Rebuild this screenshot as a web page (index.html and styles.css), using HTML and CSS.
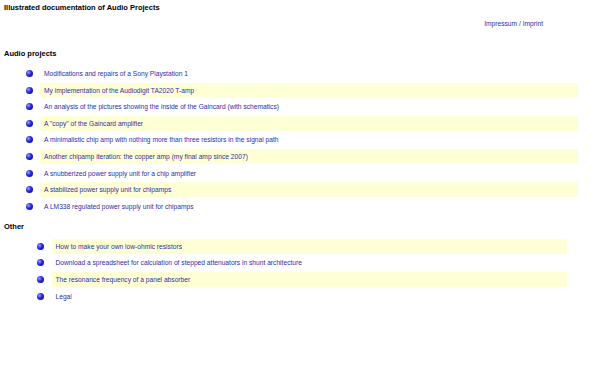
FILE: index.html
```html
<!DOCTYPE html>
<html lang="en">
<head>
  <meta charset="UTF-8" />
  <title>Illustrated documentation of Audio Projects</title>
  <link rel="stylesheet" href="styles.css">
</head>
<body>
  <h1>Illustrated documentation of Audio Projects</h1>
  <p class="imprint"><a href="#">Impressum / Imprint</a></p>

  <h2>Audio projects</h2>
  <ul class="projects">
    <li><span class="dot"></span><a href="#">Modifications and repairs of a Sony Playstation 1</a></li>
    <li class="hl"><span class="dot"></span><a href="#">My implementation of the Audiodigit TA2020 T-amp</a></li>
    <li><span class="dot"></span><a href="#">An analysis of the pictures showing the inside of the Gaincard (with schematics)</a></li>
    <li class="hl"><span class="dot"></span><a href="#">A "copy" of the Gaincard amplifier</a></li>
    <li><span class="dot"></span><a href="#">A minimalistic chip amp with nothing more than three resistors in the signal path</a></li>
    <li class="hl"><span class="dot"></span><a href="#">Another chipamp iteration: the copper amp (my final amp since 2007)</a></li>
    <li><span class="dot"></span><a href="#">A snubberized power supply unit for a chip amplifier</a></li>
    <li class="hl"><span class="dot"></span><a href="#">A stabilized power supply unit for chipamps</a></li>
    <li><span class="dot"></span><a href="#">A LM338 regulated power supply unit for chipamps</a></li>
  </ul>

  <h2 class="other-title">Other</h2>
  <ul class="other">
    <li class="hl"><span class="dot"></span><a href="#">How to make your own low-ohmic resistors</a></li>
    <li><span class="dot"></span><a href="#">Download a spreadsheet for calculation of stepped attenuators in shunt architecture</a></li>
    <li class="hl"><span class="dot"></span><a href="#">The resonance frequency of a panel absorber</a></li>
    <li><span class="dot"></span><a href="#">Legal</a></li>
  </ul>
</body>
</html>
```

FILE: styles.css
```css
/* Global styles */
body { margin: 0; padding: 0 4px; font-family: 'Liberation Sans', Arial, sans-serif; color: #000; background: #fff; }
a { color: #2e2ea6; text-decoration: none; }

/* Headings */
h1 { font-size: 7.5px; line-height: 9px; margin: 3px 0 0; font-weight: bold; }
h2 { font-size: 7.5px; line-height: 9px; margin: 21.7px 0 0; font-weight: bold; }
h2.other-title { margin-top: 8.3px; }

/* Imprint link */
.imprint { margin: 6.5px 0 0; padding-right: 53px; text-align: right; font-size: 6.67px; line-height: 9px; }

/* Link lists */
ul { list-style: none; margin: 7.9px 18px 0 0; padding: 0; display: flex; flex-direction: column; gap: 1.6px; font-size: 6.67px; }
ul li { display: flex; align-items: center; height: 15px; }
ul li a { flex: 1; align-self: stretch; display: flex; align-items: center; padding-left: 4px; }
ul li.hl a { background: #ffffd6; }
.dot { width: 7px; height: 7px; border-radius: 50%; margin: 0 7px 0 22px; background: radial-gradient(circle at 35% 35%, #9a9aff 0, #2424e0 45%, #00009a 100%); }

.other { margin: 7.6px 29px 0 0; }
.other .dot { margin: 0 8px 0 32.5px; }
```
